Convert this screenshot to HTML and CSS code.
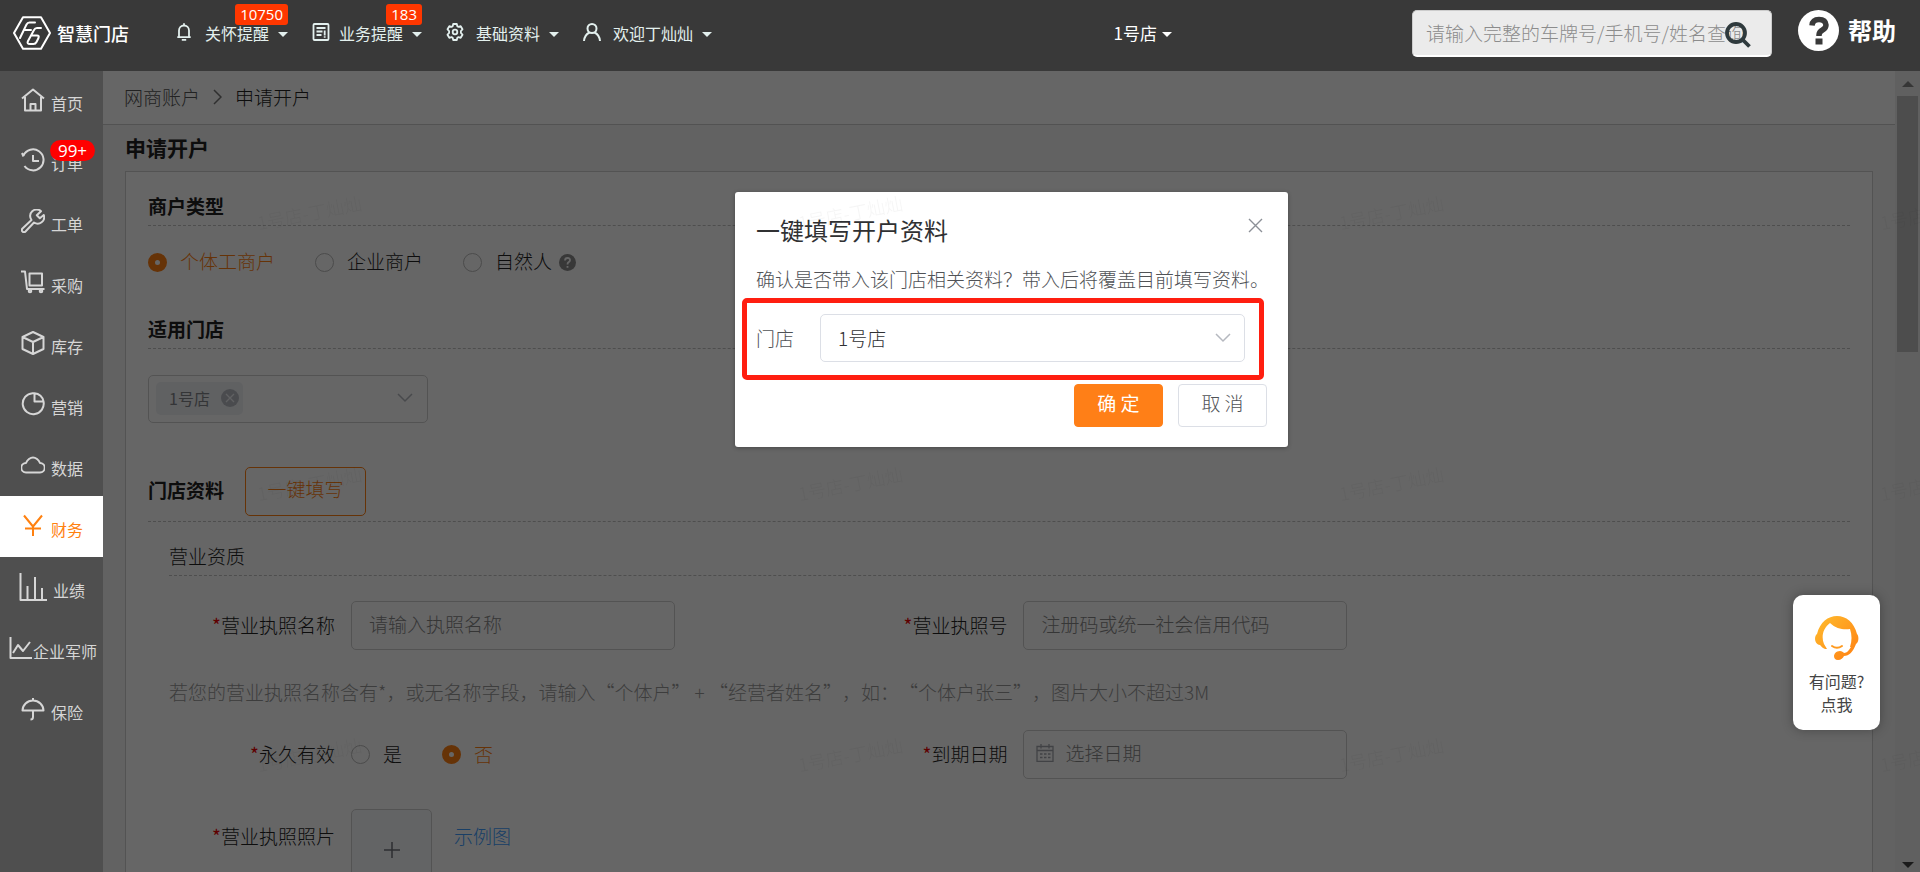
FILE: index.html
```html
<!DOCTYPE html>
<html lang="zh-CN">
<head>
<meta charset="utf-8">
<title>申请开户</title>
<link rel="stylesheet" href="styles.css">
</head>
<body>
<div class="app">
  <header class="topbar">
    <a class="brand" href="#">
      <svg class="brand-mark" viewBox="0 0 38 34" fill="none" stroke="#fff" stroke-width="2" stroke-linejoin="round" stroke-linecap="round"><path d="M10 1.2h18L37 17l-9 15.800H10L1 17z"/><path d="M22 6.500h-5.500q-2 0-3 2L7 22M11 14h7"/><path d="M28 12h-4q-2 0-3 2l-6 11q-1.500 3 2 3h3.500q2 0 3-2l2-4q1-2.500-1.500-2.500H19"/></svg>
      <span class="brand-name">智慧门店</span>
    </a>
    <nav class="topnav">
      <button class="topnav-item" type="button">
        <svg class="topnav-icon" viewBox="0 0 18 18" fill="none" stroke="currentColor" stroke-width="1.800"><path d="M4 14V7.500a5 5 0 0 1 10 0V14M2.300 14.200h13.400M9 3V.3M6.800 16.800h4.400"/></svg>
        <span>关怀提醒</span><i class="caret"></i><b class="count">10750</b>
      </button>
      <button class="topnav-item" type="button">
        <svg class="topnav-icon topnav-icon-tight" viewBox="0 0 18 18" fill="none" stroke="currentColor" stroke-width="1.800"><rect x="1.500" y="1" width="15" height="16" rx="1"/><path d="M4.500 5h9M4.500 8.500h6M4.500 12h5M12.700 7.500v5M12.700 13.300v1.500"/></svg>
        <span>业务提醒</span><i class="caret"></i><b class="count">183</b>
      </button>
      <button class="topnav-item" type="button">
        <svg class="topnav-icon" viewBox="0 0 18 18" fill="none" stroke="currentColor" stroke-width="1.800" stroke-linejoin="round"><path d="M7.200 1h3.600l.5 2.200 1.200.7 2.200-.7 1.800 3.100L14.900 8v2l1.600 1.700-1.800 3.100-2.200-.7-1.200.7-.5 2.200H7.200l-.5-2.200-1.200-.7-2.200.7-1.800-3.100L3.100 10V8L1.500 6.300l1.800-3.100 2.200.7 1.200-.7z"/><circle cx="9" cy="9" r="2.300"/></svg>
        <span>基础资料</span><i class="caret"></i>
      </button>
      <button class="topnav-item" type="button">
        <svg class="topnav-icon" viewBox="0 0 18 18" fill="none" stroke="currentColor" stroke-width="2"><circle cx="9" cy="5.500" r="4.500"/><path d="M1 18q.5-6 5.500-8.500M17 18q-.5-6-5.500-8.500"/></svg>
        <span>欢迎丁灿灿</span><i class="caret"></i>
      </button>
    </nav>
    <button class="store-switch" type="button">1号店<i class="caret"></i></button>
    <form class="search">
      <input class="search-input" type="text" aria-label="查询" placeholder="请输入完整的车牌号/手机号/姓名查询">
      <button class="search-button" type="button" aria-label="搜索">
        <svg viewBox="0 0 26 26" fill="none" stroke="#2f3a3d" stroke-width="3.800"><circle cx="11" cy="11" r="9"/><path d="m17.500 17.500 7 7"/></svg>
      </button>
    </form>
    <a class="help" href="#">
      <svg class="help-icon" viewBox="0 0 41 41"><circle cx="20.500" cy="20.500" r="20.500" fill="#fff"/><path d="M14 15.500q.5-6 7-6t7 5.500q0 3-3.500 5t-3.500 5v1" fill="none" stroke="#393939" stroke-width="5.500"/><path d="M17.500 28.500h7v6h-7z" fill="#393939"/></svg>
      <span>帮助</span>
    </a>
  </header>

  <div class="workspace">
    <nav class="sidebar">
      <a class="side-item" href="#"><svg class="side-icon" viewBox="0 0 24 24"><path d="M1 10.500 12 1.500l11 9M4 9v13.500h16V9M9.500 22v-6h5v6"/></svg><span>首页</span></a>
      <a class="side-item" href="#"><svg class="side-icon" viewBox="0 0 24 24"><path d="M2.500 7.500A10.500 10.500 0 1 1 3.500 18M1 5l1.500 3.500M12 7v6h6"/></svg><span>订单</span><b class="side-count">99+</b></a>
      <a class="side-item" href="#"><svg class="side-icon" viewBox="0 0 24 24"><path d="M20 2.200A6.500 6.500 0 0 0 10.500 11L1.500 19.500a1.800 1.800 0 0 0 3 3L13 13.500A6.500 6.500 0 0 0 22.800 6l-4 3.200-3-3z"/></svg><span>工单</span></a>
      <a class="side-item" href="#"><svg class="side-icon" viewBox="0 0 24 24"><path d="M0 1.500h4l2 17.500h17.500M8.500 3.500H21v12H8.500z"/><circle cx="9" cy="21" r="1.300"/><circle cx="20" cy="21" r="1.300"/></svg><span>采购</span></a>
      <a class="side-item" href="#"><svg class="side-icon" viewBox="0 0 24 24"><path d="m12 1 10.500 5v12L12 23 1.500 18V6zM1.500 6 12 11l10.500-5M12 11v12"/></svg><span>库存</span></a>
      <a class="side-item" href="#"><svg class="side-icon" viewBox="0 0 24 24"><path d="M13.500 1.200h-2a10.500 10.500 0 1 0 11 8.300M13.500 1.200v8.300h9a9.500 9.500 0 0 0-9-8.300z"/></svg><span>营销</span></a>
      <a class="side-item" href="#"><svg class="side-icon" viewBox="0 0 24 24"><path d="M5 19.500a4.500 4.500 0 0 1 0-9.500q1-2.500 3-4 4-3 8 0 2 1.500 3 4a4.500 4.500 0 0 1 0 9.500z"/></svg><span>数据</span></a>
      <a class="side-item side-item-active" href="#"><svg class="side-icon" viewBox="0 0 24 24"><path d="m3 1.500 9 11 9-11M12 12.500V22M4 14.500h16"/></svg><span>财务</span></a>
      <a class="side-item" href="#"><svg class="side-icon side-icon-large" viewBox="0 0 28 28"><path d="M1.500 0v27H28M8.500 13v13.500M16 4v22.500M23 15v11.500"/></svg><span>业绩</span></a>
      <a class="side-item side-item-wide" href="#"><svg class="side-icon" viewBox="0 0 24 24"><path d="M2.500 1v21H24M5 17l5-8 5 6 7-9"/></svg><span>企业军师</span></a>
      <a class="side-item" href="#"><svg class="side-icon" viewBox="0 0 24 24"><path d="M1.500 13.500a10.500 10 0 0 1 21 0zM12 1v2.500M12 13.500V20q0 2.500-2.500 2.500"/></svg><span>保险</span></a>
    </nav>

    <div class="stage">
      <main class="page">
        <nav class="crumbs"><a class="crumb-link" href="#">网商账户</a><svg class="crumb-sep" viewBox="0 0 9 16"><path d="m1 1 7 7-7 7"/></svg><span>申请开户</span></nav>
        <h1 class="page-title">申请开户</h1>
        <form class="panel">
          <h2 class="section-title">商户类型</h2>
          <div class="type-options">
            <label class="option"><input type="radio" name="type" checked><span>个体工商户</span></label>
            <label class="option"><input type="radio" name="type"><span>企业商户</span></label>
            <label class="option"><input type="radio" name="type"><span>自然人</span>
              <svg class="hint-icon" viewBox="0 0 17 17"><circle cx="8.500" cy="8.500" r="8.500" fill="#8c8c8c"/><path d="M6 6.500q0-2.500 2.600-2.500T11 6.300q0 1.200-1.300 1.800T8.500 10.500M8.500 12v1.800" fill="none" stroke="#fff" stroke-width="1.800"/></svg>
            </label>
          </div>
          <h2 class="section-title section-title-spaced">适用门店</h2>
          <div class="multi">
            <span class="tag">1号店<button class="tag-close" type="button" aria-label="移除"><svg viewBox="0 0 18 18"><circle cx="9" cy="9" r="9" fill="#b9bcc4"/><path d="m5 5 8 8m0-8-8 8" stroke="#f0f2f5" stroke-width="1.300"/></svg></button></span>
            <svg class="chevron" viewBox="0 0 16 10"><path d="m1 1 7 7 7-7"/></svg>
          </div>
          <div class="section-head">
            <h2 class="section-name">门店资料</h2>
            <button class="fill-button" type="button">一键填写</button>
          </div>
          <section class="subsection">
            <h3 class="sub-title">营业资质</h3>
            <div class="form-row">
              <div class="field"><label class="field-label" for="lic-name"><em>*</em>营业执照名称</label><input class="field-input" id="lic-name" type="text" placeholder="请输入执照名称"></div>
              <div class="field"><label class="field-label" for="lic-no"><em>*</em>营业执照号</label><input class="field-input" id="lic-no" type="text" placeholder="注册码或统一社会信用代码"></div>
            </div>
            <p class="note">若您的营业执照名称含有*，或无名称字段，请输入“个体户” + “经营者姓名”，如：“个体户张三”，图片大小不超过3M</p>
            <div class="form-row">
              <div class="field" role="radiogroup" aria-labelledby="forever">
                <span class="field-label" id="forever"><em>*</em>永久有效</span>
                <div class="yes-no">
                  <label class="option"><input type="radio" name="forever"><span>是</span></label>
                  <label class="option"><input type="radio" name="forever" checked><span>否</span></label>
                </div>
              </div>
              <div class="field"><label class="field-label" for="expiry"><em>*</em>到期日期</label>
                <div class="date-box">
                  <svg class="date-icon" viewBox="0 0 18 18" fill="none" stroke="#a3a6ad" stroke-width="1.300"><path d="M1 2.500h16v14.800H1zM1 6.500h16M5 0v4.500M13 0v4.500M4 10h2.500m1.500 0h2.500m1.500 0h2.500M4 13.500h2.500m1.500 0h2.500m1.500 0h2.500"/></svg>
                  <input class="date-input" id="expiry" type="text" placeholder="选择日期">
                </div>
              </div>
            </div>
            <div class="form-row form-row-photo">
              <div class="field field-photo">
                <span class="field-label"><em>*</em>营业执照照片</span>
                <button class="upload" type="button" aria-label="上传"><svg viewBox="0 0 16 16"><path d="M8 0v16M0 8h16" stroke="#70747c" stroke-width="1.500"/></svg></button>
                <a class="sample" href="#">示例图</a>
              </div>
            </div>
          </section>
        </form>
      </main>
      <div class="scrollbar"><i class="scroll-up"></i><i class="scroll-thumb"></i><i class="scroll-down"></i></div>

      <div class="mask">
        <section class="dialog" role="dialog" aria-labelledby="dialog-title">
          <div class="dialog-head">
            <h2 class="dialog-title" id="dialog-title">一键填写开户资料</h2>
            <button class="dialog-close" type="button" aria-label="关闭"><svg viewBox="0 0 15 15"><path d="m1 1 13 13m0-13L1 14" stroke="#8c9097" stroke-width="1.400"/></svg></button>
          </div>
          <p class="dialog-text">确认是否带入该门店相关资料？带入后将覆盖目前填写资料。</p>
          <div class="dialog-field">
            <label for="store">门店</label>
            <div class="select-box">
              <select class="select" id="store"><option>1号店</option></select>
              <svg class="chevron select-chevron" viewBox="0 0 16 10"><path d="m1 1 7 7 7-7"/></svg>
            </div>
          </div>
          <div class="dialog-actions">
            <button class="button button-primary" type="button">确 定</button>
            <button class="button" type="button">取 消</button>
          </div>
        </section>
      </div>
    </div>
  </div>

  <button class="service" type="button">
    <svg class="service-icon" viewBox="0 0 44 44"><defs><linearGradient id="warm" x1="0" y1="0" x2="1" y2="1"><stop offset="0" stop-color="#ffbd2e"/><stop offset="1" stop-color="#ff7f12"/></linearGradient></defs><path fill="url(#warm)" d="M2 18C5 6 13 0 22 0s17 6 20 18c2 2 2 8-1 10-3 8-7 12-12 12-1 2-3 4-6 4-3 0-4-2-4-4s2-5 6-5c2 0 3 1 4 2 3 0 5-3 7-6l-1 0c2-6 2-12 0-18-6 1-14 0-20-6-7 5-9 14-6 21l3 5C8 33 7 31 5 29c-6-1-6-9-3-11z"/><path d="M17 30q5 3.500 10 0" fill="none" stroke="#ff9a1f" stroke-width="2" stroke-linecap="round"/></svg>
    <span>有问题?<br>点我</span>
  </button>

  <svg class="watermark" aria-hidden="true">
    <defs><pattern id="mark" x="257" y="159" width="541" height="271" patternUnits="userSpaceOnUse"><text class="watermark-text" x="2" y="71" transform="rotate(-11 2 71)">1号店-丁灿灿</text></pattern></defs>
    <rect width="100%" height="100%" fill="url(#mark)"/>
  </svg>
</div>
</body>
</html>
```
FILE: styles.css
```css
* { box-sizing: border-box; }

body {
  margin: 0;
  font-family: "Noto Sans CJK SC", sans-serif;
  font-size: 19px;
  font-weight: 300;
  line-height: 26px;
  text-spacing-trim: space-all;
  color: #222;
}

h1, h2, h3, p { margin: 0; }
a { color: inherit; text-decoration: none; }
button, input, select { font: inherit; color: inherit; }
button { padding: 0; border: 0; background: none; cursor: pointer; }
svg { display: block; flex: none; }

.app {
  position: relative;
  display: flex;
  flex-direction: column;
  height: 100vh;
  overflow: hidden;
}

/* Top bar */
.topbar {
  display: flex;
  flex: none;
  align-items: flex-start;
  height: 71px;
  padding-left: 13px;
  background: #393939;
  color: #fff;
}
.brand { display: flex; align-items: center; gap: 6px; width: 162px; margin-top: 16px; }
.brand-mark { width: 38px; height: 34px; }
.brand-name { font-size: 18px; font-weight: 500; }

.topnav { display: flex; gap: 24px; margin-top: 19px; }
.topnav-item {
  position: relative;
  display: flex;
  align-items: center;
  color: #e3f0ee;
  font-size: 16px;
  font-weight: 400;
  line-height: 28px;
}
.topnav-icon { width: 18px; height: 18px; margin: 0 12px 2px 0; }
.topnav-icon-tight { margin-right: 9px; }
.caret {
  margin-left: 9px;
  border: 5px solid transparent;
  border-top-color: currentColor;
  border-bottom: 0;
}
.topnav-item .caret, .store-switch .caret { margin-top: 3px; }
.count {
  position: absolute;
  right: 0;
  top: -15px;
  padding: 0 5px;
  border-radius: 3px;
  background: #ff3700;
  color: #fff;
  font-family: "Open Sans", sans-serif;
  font-size: 15px;
  font-weight: 400;
  line-height: 21px;
}
.store-switch {
  display: flex;
  align-items: center;
  margin: 19px 240px 0 auto;
  font-size: 17px;
  font-weight: 400;
  line-height: 28px;
}
.store-switch .caret { margin-left: 5px; }

.search { position: relative; width: 360px; margin-top: 10px; }
.search-input {
  display: block;
  width: 100%;
  height: 47px;
  padding: 0 13px 2px;
  border: 1px solid #ccc;
  border-bottom: 2px solid #fff;
  border-radius: 5px;
  background: #ebebeb;
  outline: 0;
}
.search-input::placeholder { color: #8c8c8c; }
.search-button { position: absolute; right: 21px; top: 12px; width: 26px; height: 26px; }
.help {
  display: flex;
  align-items: center;
  gap: 9px;
  margin: 10px 24px 0 26px;
  font-size: 24px;
  font-weight: 700;
}
.help-icon { width: 41px; height: 41px; }
.help span { margin-bottom: 2px; }

/* Sidebar */
.workspace { display: flex; flex: 1; min-height: 0; }
.sidebar { flex: none; width: 103px; background: #4f4f4f; color: #d6d6d6; }
.side-item {
  position: relative;
  display: flex;
  align-items: center;
  justify-content: center;
  gap: 6px;
  height: 61px;
  padding-left: 1px;
  font-size: 16px;
  font-weight: 400;
}
.side-item:first-child { height: 59px; }
.side-item-active { background: #fff; color: #ff8110; }
.side-item-wide { gap: 1px; padding-left: 2px; }
.side-item span { margin-top: 4px; }
.side-icon { width: 24px; height: 24px; margin-bottom: 2px; fill: none; stroke: currentColor; stroke-width: 2; stroke-linejoin: round; }
.side-icon-large { width: 28px; height: 28px; }
.side-count {
  position: absolute;
  left: 50px;
  top: 10px;
  min-width: 45px;
  border-radius: 11px;
  background: #f00;
  color: #fff;
  font-family: "Open Sans", sans-serif;
  font-size: 17px;
  font-weight: 400;
  line-height: 21px;
  text-align: center;
}

/* Page under the mask */
.stage { position: relative; display: flex; flex: 1; min-width: 0; overflow: hidden; }
.page { flex: 1; min-width: 0; background: #f5f5f5; }
.crumbs {
  display: flex;
  align-items: center;
  gap: 13px;
  height: 54px;
  padding: 0 21px 2px;
  border-bottom: 1px solid #ccc;
  background: #fff;
}
.crumb-link { color: #555; }
.crumb-sep { width: 9px; height: 16px; fill: none; stroke: #777; stroke-width: 1.500; }
.page-title { padding: 0 22px 2px; font-size: 21px; font-weight: 700; line-height: 44px; }
.panel {
  height: 900px;
  margin: 0 22px;
  padding: 18px 22px;
  border: 1px solid #d0d0d0;
  background: #fff;
}
.section-title, .section-name, .sub-title { font-size: 19px; line-height: 32px; }
.section-title, .sub-title { padding-bottom: 3px; }
.section-name { padding-bottom: 4px; }
.section-title, .section-name { font-weight: 700; }
.sub-title { font-weight: 300; }
.section-title, .section-head, .sub-title { border-bottom: 1px dashed #c4c4c4; }
.section-title-spaced { margin-top: 37px; }

.type-options { display: flex; gap: 40px; margin-top: 22px; }
.option { display: flex; align-items: center; gap: 13px; }
.option input {
  appearance: none;
  flex: none;
  width: 19px;
  height: 19px;
  margin: 0;
  border: 1px solid #bbb;
  border-radius: 50%;
}
.option input:checked { border: 7px solid #ff7f12; background: #fff; }
.option input:checked + span { color: #ff7f12; }
.option span { padding-bottom: 2px; }
.hint-icon { width: 17px; height: 17px; margin-left: -6px; }

.multi {
  display: flex;
  align-items: center;
  justify-content: space-between;
  width: 280px;
  height: 48px;
  margin-top: 26px;
  padding: 0 14px 2px 7px;
  border: 1px solid #d0d0d0;
  border-radius: 5px;
}
.tag {
  display: flex;
  align-items: center;
  gap: 11px;
  padding: 0 4px 0 13px;
  border-radius: 5px;
  background: #f0f2f5;
  color: #82858b;
  font-size: 16px;
  font-weight: 400;
  line-height: 33px;
}
.tag-close { width: 18px; height: 18px; }
.chevron { width: 16px; height: 10px; fill: none; stroke: #b5b8bf; stroke-width: 1.500; }

.section-head { display: flex; align-items: center; gap: 21px; margin-top: 44px; padding-bottom: 5px; }
.fill-button {
  width: 121px;
  height: 49px;
  padding-bottom: 5px;
  border: 1px solid #ff7f12;
  border-radius: 5px;
  color: #ff7f12;
}
.subsection { padding: 18px 0 0 21px; }

.form-row { display: grid; grid-template-columns: 2fr 2fr 1fr; margin-top: 25px; }
.form-row-photo { margin-top: 30px; }
.field { display: flex; align-items: center; gap: 16px; }
.field-label { flex: none; width: 166px; padding-bottom: 2px; text-align: right; white-space: nowrap; }
.field-label em { color: #e00; font-style: normal; font-weight: 400; }
.field-input, .date-box {
  width: 324px;
  height: 49px;
  border: 1px solid #d0d0d0;
  border-radius: 5px;
  background: #fff;
}
.field-input { padding: 0 17px 4px; outline: 0; }
.field-input::placeholder, .date-input::placeholder { color: #888; }
.note { margin-top: 29px; color: #999; white-space: nowrap; }
.yes-no { display: flex; gap: 40px; }
.date-box { display: flex; align-items: center; gap: 11px; padding: 0 12px 4px; }
.date-icon { width: 18px; height: 18px; }
.date-input { min-width: 0; flex: 1; padding: 0; border: 0; outline: 0; background: none; }
.field-photo { align-items: flex-start; line-height: 54px; }
.upload {
  display: flex;
  align-items: center;
  justify-content: center;
  width: 81px;
  height: 81px;
  border: 1px solid #d0d0d0;
  border-radius: 5px;
  background: #f7f9fd;
}
.upload svg { width: 16px; height: 16px; }
.sample { margin-left: 6px; color: #409eff; }

.scrollbar {
  display: flex;
  flex: none;
  flex-direction: column;
  align-items: center;
  width: 25px;
  padding: 10px 0 4px;
  background: #f0f0f0;
}
.scroll-up { border: 6px solid transparent; border-top: 0; border-bottom-color: #888; }
.scroll-thumb { width: 21px; height: 256px; margin: 9px 0 auto; background: #c0c0c0; }
.scroll-down { border: 6px solid transparent; border-bottom: 0; border-top-color: #444; }

/* Mask and dialog */
.mask {
  position: absolute;
  inset: 0;
  display: flex;
  align-items: flex-start;
  justify-content: center;
  padding-top: 121px;
  background: rgba(0, 0, 0, .6);
}
.dialog {
  width: 553px;
  padding: 20px 21px;
  border-radius: 3px;
  background: #fff;
  box-shadow: 0 1px 4px rgba(0, 0, 0, .3);
  color: #505256;
}
.dialog-head { display: flex; justify-content: space-between; }
.dialog-title { color: #303133; font-size: 24px; font-weight: 400; line-height: 36px; }
.dialog-close { width: 15px; height: 15px; margin: 6px 4px 0 0; }
.dialog-close svg { width: 15px; height: 15px; }
.dialog-text { padding: 17px 0 5px; line-height: 28px; white-space: nowrap; }
.dialog-field {
  display: flex;
  align-items: center;
  gap: 26px;
  height: 82px;
  margin: 0 3px 0 -14px;
  padding: 0 14px 2px 9px;
  border: 5px solid #ff1e10;
  border-radius: 5px;
}
.select-box { position: relative; flex: 1; }
.select {
  appearance: none;
  display: block;
  width: 100%;
  height: 48px;
  padding: 0 17px;
  border: 1px solid #dcdfe6;
  border-radius: 5px;
  background: #fff;
  color: #303133;
}
.select-chevron { position: absolute; right: 14px; top: 19px; }
.dialog-actions { display: flex; justify-content: flex-end; gap: 15px; padding-top: 4px; }
.button {
  width: 89px;
  height: 43px;
  padding-bottom: 5px;
  border: 1px solid #dcdfe6;
  border-radius: 4px;
}
.button-primary { border-color: #ff7f17; background: #ff7f17; color: #fff; font-weight: 400; }

/* Floating service entry */
.service {
  position: absolute;
  right: 40px;
  bottom: 142px;
  display: flex;
  flex-direction: column;
  align-items: center;
  gap: 10px;
  width: 87px;
  height: 135px;
  padding-top: 21px;
  border-radius: 10px;
  background: #fff;
  box-shadow: 0 0 12px rgba(0, 0, 0, .3);
  color: #444;
  font-size: 16px;
  font-weight: 400;
  line-height: 23px;
}
.service-icon { width: 44px; height: 44px; }

.watermark { position: absolute; inset: 0; width: 100%; height: 100%; pointer-events: none; }
.watermark-text { fill: rgba(0, 0, 0, .04); font-size: 18px; }
```
